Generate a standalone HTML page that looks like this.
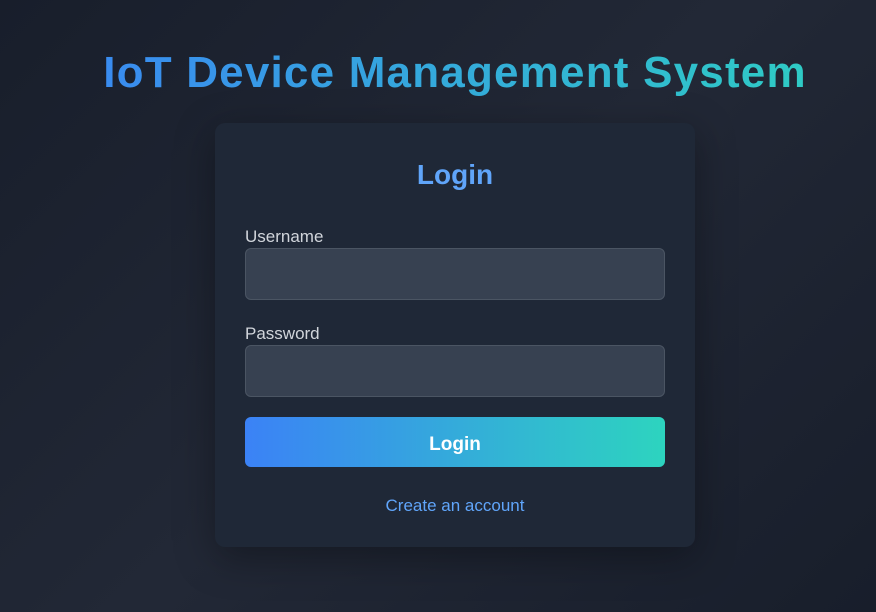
<!DOCTYPE html>
<html><head><style>
*{box-sizing:border-box;margin:0;padding:0}
body{width:876px;height:612px;overflow:hidden;background:linear-gradient(135deg,#181e2b 0%,#222836 50%,#181e2b 100%);font-family:"Liberation Sans",sans-serif;position:relative}
h1{position:absolute;left:0;width:910px;top:46px;text-align:center;font-size:44px;font-weight:bold;letter-spacing:1.2px;background:linear-gradient(90deg,#3b82f6,#2dd4bf);-webkit-background-clip:text;background-clip:text;color:transparent;line-height:54px}
.card{position:absolute;left:215px;top:123px;width:480px;height:424px;background:#1f2837;border-radius:10px;box-shadow:0 10px 40px rgba(0,0,0,.35)}
.t{position:absolute;color:#60a5fa;font-size:28px;font-weight:bold;left:215px;width:480px;text-align:center;top:159px}
.lbl{position:absolute;left:245px;color:#d1d5db;font-size:17px}
.inp{position:absolute;left:245px;width:420px;height:52px;background:#374151;border:1px solid #4b5563;border-radius:6px}
.btn{position:absolute;left:245px;top:417px;width:420px;height:50px;border-radius:6px;background:linear-gradient(90deg,#3b82f6,#2dd4bf);color:#fff;font-weight:bold;font-size:19px;text-align:center;line-height:56px}
.lnk{position:absolute;left:215px;width:480px;text-align:center;top:496px;color:#60a5fa;font-size:17px}
</style></head><body>
<h1>IoT Device Management System</h1>
<div class="card"></div>
<div class="t">Login</div>
<div class="lbl" style="top:227px">Username</div>
<div class="inp" style="top:248px"></div>
<div class="lbl" style="top:324px">Password</div>
<div class="inp" style="top:345px"></div>
<div class="btn">Login</div>
<div class="lnk">Create an account</div>
</body></html>
